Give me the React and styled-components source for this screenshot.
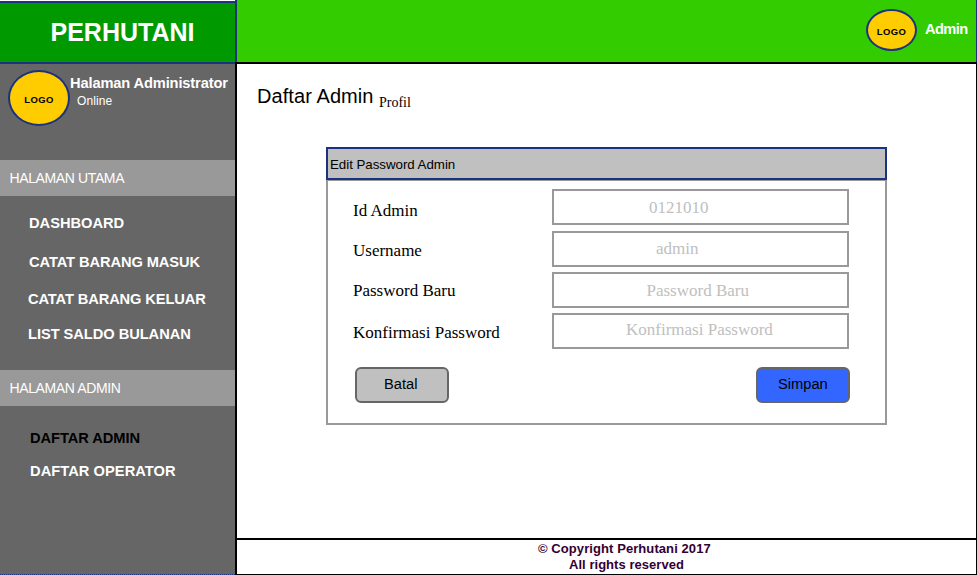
import React from "react";
import styled, { createGlobalStyle } from "styled-components";

const sans = '"Liberation Sans", Arial, sans-serif';
const serif = '"Liberation Serif", "Times New Roman", serif';
const navy = "#1b3281";

const GlobalStyle = createGlobalStyle`
  * { box-sizing: border-box; }
  body { margin: 0; background: #fff; font-family: ${sans}; color: #000; }
`;

const Page = styled.div`
  display: grid;
  grid-template-columns: 235px 1fr;
  width: 977px;
  height: 575px;
  overflow: hidden;
  white-space: nowrap;
`;

const Sidebar = styled.aside`
  display: flex;
  flex-direction: column;
  background: #666;
  border-bottom: 1px dotted ${navy};
`;

const Brand = styled.div`
  flex: none;
  height: 63px;
  margin-top: 1px;
  padding: 15px 0 0 50.5px;
  background: #090;
  border-top: 2px solid ${navy};
  border-bottom: 2px solid ${navy};
  box-shadow: 0 -1px 0 #fff;
  font-size: 25px;
  line-height: 28px;
  font-weight: 700;
  color: #fff;
`;

const Logo = styled.div`
  flex: none;
  width: ${(p) => p.$width}px;
  height: ${(p) => p.$height}px;
  padding-top: ${(p) => p.$drop}px;
  border: 2px solid ${navy};
  border-radius: 50%;
  background: #fc0;
  font-size: 9.5px;
  line-height: 11px;
  font-weight: 700;
  letter-spacing: 0.4px;
  text-align: center;
  color: #000;
`;

const Profile = styled.div`
  display: flex;
  flex: none;
  height: 96px;
  padding: 6px 0 0 8px;
  color: #fff;
`;

const ProfileName = styled.div`
  margin-top: 3px;
  font-size: 14.67px;
  line-height: 20px;
  font-weight: 700;
  letter-spacing: -0.14px;
`;

const Status = styled.div`
  margin: 1px 0 0 7px;
  font-size: 12px;
  line-height: 14px;
  letter-spacing: 0.1px;
`;

const SectionTitle = styled.div`
  flex: none;
  height: 36px;
  padding: 8px 0 0 9.5px;
  background: #999;
  color: #fff;
  font-size: 14px;
  line-height: 20px;
  letter-spacing: -0.38px;
`;

const Menu = styled.nav`
  display: flex;
  flex-direction: column;
  flex: none;
  height: ${(p) => p.$height}px;
`;

const MenuItem = styled.a`
  margin: ${(p) => p.$gap}px 0 0 ${(p) => p.$indent}px;
  font-size: 14.67px;
  line-height: 20px;
  font-weight: 700;
  letter-spacing: ${(p) => p.$tracking}px;
  color: ${(p) => (p.$active ? "#000" : "#fff")};
`;

const Main = styled.div`
  display: flex;
  flex-direction: column;
  min-width: 0;
`;

const Header = styled.header`
  display: flex;
  justify-content: flex-end;
  flex: none;
  height: 62px;
  padding: 9px 7px 0 0;
  background: #3c0;
  border-left: 2px solid ${navy};
  border-right: 1px solid ${navy};
`;

const UserName = styled.div`
  width: 44px;
  margin: 10px 0 0 8px;
  font-size: 14.67px;
  line-height: 20px;
  font-weight: 700;
  letter-spacing: -0.6px;
  color: #fff;
`;

const Body = styled.main`
  flex: 1;
  border: solid #000;
  border-width: 2px 1px 0 2px;
`;

const Heading = styled.div`
  display: flex;
  align-items: flex-start;
  height: 83px;
  padding: 21px 0 0 20px;
`;

const Title = styled.h1`
  width: 122px;
  margin: 0;
  font-size: 20px;
  line-height: 22px;
  font-weight: 400;
  letter-spacing: 0.08px;
`;

const Subtitle = styled.span`
  margin-top: 10px;
  font: 14px/15px ${serif};
`;

const Panel = styled.section`
  width: 561px;
  margin-left: 89px;
`;

const PanelTitle = styled.div`
  height: 33px;
  padding: 6px 0 0 2px;
  border: 2px solid ${navy};
  background: #c0c0c0;
  font-size: 13.33px;
  line-height: 19px;
  letter-spacing: -0.04px;
`;

const Form = styled.div`
  height: 245px;
  padding: 8px 36px 0 25px;
  border: 2px solid #999;
  border-top-width: 1px;
`;

const Row = styled.div`
  display: flex;
  justify-content: space-between;
  margin-bottom: ${(p) => p.$gap}px;
`;

const Label = styled.label`
  padding-top: ${(p) => p.$drop}px;
  font: 17px/19px ${serif};
`;

const Field = styled.div`
  width: 297px;
  height: 36px;
  padding: ${(p) => p.$drop}px 0 0 ${(p) => p.$indent}px;
  border: 2px solid #999;
  font: 17px/19px ${serif};
  color: #c0c0c0;
`;

const Actions = styled.div`
  display: flex;
  justify-content: space-between;
  margin: 18px -1px 0 2px;
`;

const Button = styled.button`
  width: 94px;
  height: 36px;
  padding: 0 0 2px;
  border: 2px solid #666;
  border-radius: 6px;
  background: ${(p) => (p.$primary ? "#36f" : "#c0c0c0")};
  font: 14.67px/20px ${sans};
  text-align: left;
  text-indent: ${(p) => p.$indent}px;
  color: #000;
`;

const Footer = styled.footer`
  display: flex;
  flex-direction: column;
  flex: none;
  height: 37px;
  padding-top: 1px;
  border: solid #000;
  border-width: 2px 1px 1px 2px;
  font-size: 13px;
  line-height: 16px;
  font-weight: 700;
  color: #303;
`;

const FooterLine = styled.div`
  padding-left: ${(p) => p.$indent}px;
  letter-spacing: ${(p) => p.$tracking}px;
`;

const mainMenu = [
  { text: "DASHBOARD", gap: 17, indent: 29, tracking: -0.02 },
  { text: "CATAT BARANG MASUK", gap: 19, indent: 29, tracking: -0.09 },
  { text: "CATAT BARANG KELUAR", gap: 17, indent: 28, tracking: -0.12 },
  { text: "LIST SALDO BULANAN", gap: 15, indent: 28, tracking: -0.05 },
];

const adminMenu = [
  { text: "DAFTAR ADMIN", gap: 22, indent: 30, tracking: -0.06, active: true },
  { text: "DAFTAR OPERATOR", gap: 13, indent: 30, tracking: 0.05 },
];

const fields = [
  { label: "Id Admin", value: "0121010", labelDrop: 12, drop: 7, indent: 95, gap: 6 },
  { label: "Username", value: "admin", labelDrop: 10, drop: 6, indent: 102, gap: 5 },
  { label: "Password Baru", value: "Password Baru", labelDrop: 9, drop: 7, indent: 92.5, gap: 5 },
  { label: "Konfirmasi Password", value: "Konfirmasi Password", labelDrop: 10, drop: 5, indent: 72, gap: 0 },
];

function MenuList({ items, height }) {
  return (
    <Menu $height={height}>
      {items.map((item) => (
        <MenuItem
          key={item.text}
          $gap={item.gap}
          $indent={item.indent}
          $tracking={item.tracking}
          $active={item.active}
        >
          {item.text}
        </MenuItem>
      ))}
    </Menu>
  );
}

export default function App() {
  return (
    <>
      <GlobalStyle />
      <Page>
        <Sidebar>
          <Brand>PERHUTANI</Brand>
          <Profile>
            <Logo $width={62} $height={56} $drop={22}>LOGO</Logo>
            <div>
              <ProfileName>Halaman Administrator</ProfileName>
              <Status>Online</Status>
            </div>
          </Profile>
          <SectionTitle>HALAMAN UTAMA</SectionTitle>
          <MenuList items={mainMenu} height={174} />
          <SectionTitle>HALAMAN ADMIN</SectionTitle>
          <MenuList items={adminMenu} height={168} />
        </Sidebar>
        <Main>
          <Header>
            <Logo $width={51} $height={42} $drop={15}>LOGO</Logo>
            <UserName>Admin</UserName>
          </Header>
          <Body>
            <Heading>
              <Title>Daftar Admin</Title>
              <Subtitle>Profil</Subtitle>
            </Heading>
            <Panel>
              <PanelTitle>Edit Password Admin</PanelTitle>
              <Form>
                {fields.map((f) => (
                  <Row key={f.label} $gap={f.gap}>
                    <Label $drop={f.labelDrop}>{f.label}</Label>
                    <Field $drop={f.drop} $indent={f.indent}>{f.value}</Field>
                  </Row>
                ))}
                <Actions>
                  <Button $indent={27}>Batal</Button>
                  <Button $primary $indent={20}>Simpan</Button>
                </Actions>
              </Form>
            </Panel>
          </Body>
          <Footer>
            <FooterLine $indent={301} $tracking={0.08}>© Copyright Perhutani 2017</FooterLine>
            <FooterLine $indent={332} $tracking={0.04}>All rights reserved</FooterLine>
          </Footer>
        </Main>
      </Page>
    </>
  );
}
